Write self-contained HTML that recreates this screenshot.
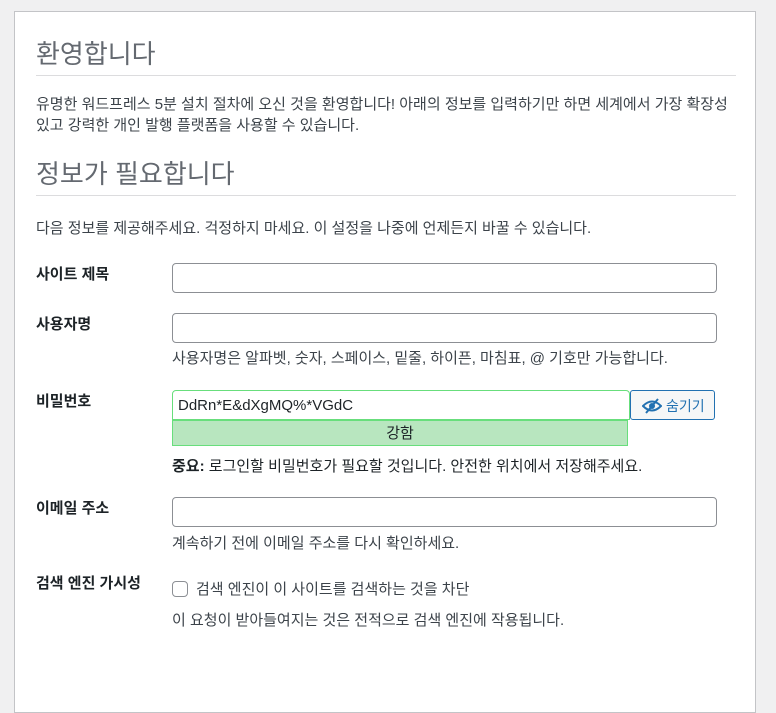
<!DOCTYPE html>
<html><head><meta charset="utf-8"><style>
body{margin:0;background:#f0f0f1;font-family:"Liberation Sans","Noto Sans CJK KR",sans-serif;color:#3c434a;font-size:15px;width:776px;height:620px;overflow:hidden;position:relative}
.box{position:absolute;left:14px;top:11px;width:740px;height:700px;background:#fff;border:1px solid #c3c4c7}
.a{position:absolute;white-space:nowrap}
h1{position:absolute;margin:0;font-weight:400;font-size:26px;color:#646970;left:21px;line-height:32px}
.hr{position:absolute;left:21px;width:700px;height:1px;background:#dcdcde}
.lbl{position:absolute;left:21px;font-weight:700;color:#1d2327;line-height:20px}
.in{position:absolute;left:157px;width:543px;height:28px;border:1px solid #8c8f94;border-radius:4px;background:#fff}
.d{position:absolute;left:157px}
.a,.lbl{line-height:20px}
</style></head><body>
<div class="box">
<h1 style="top:26px">환영합니다</h1>
<div class="hr" style="top:63px"></div>
<div class="a" style="left:21px;top:82px;line-height:21px">유명한 워드프레스 5분 설치 절차에 오신 것을 환영합니다! 아래의 정보를 입력하기만 하면 세계에서 가장 확장성<br>있고 강력한 개인 발행 플랫폼을 사용할 수 있습니다.</div>
<h1 style="top:146px">정보가 필요합니다</h1>
<div class="hr" style="top:183px"></div>
<div class="a" style="left:21px;top:207px">다음 정보를 제공해주세요. 걱정하지 마세요. 이 설정을 나중에 언제든지 바꿀 수 있습니다.</div>
<div class="lbl" style="top:253px">사이트 제목</div>
<div class="in" style="top:251px"></div>
<div class="lbl" style="top:303px">사용자명</div>
<div class="in" style="top:301px"></div>
<div class="d a" style="top:337px">사용자명은 알파벳, 숫자, 스페이스, 밑줄, 하이픈, 마침표, @ 기호만 가능합니다.</div>
<div class="lbl" style="top:380px">비밀번호</div>
<div class="a" style="left:157px;top:378px;width:451px;height:28px;border:1px solid #68de7c;border-radius:4px 4px 0 0;background:#fff;font-size:15px;line-height:30px;padding-left:5px;color:#1d2327">DdRn*E&amp;dXgMQ%*VGdC</div>
<div class="a" style="left:157px;top:408px;width:454px;height:24px;border:1px solid #68de7c;background:#b8e6bf;text-align:center;line-height:26px;color:#1d2327">강함</div>
<div class="a" style="left:615px;top:378px;width:83px;height:28px;border:1px solid #2271b1;border-radius:3px;background:#f6f7f7;color:#2271b1;line-height:30px;font-size:14px">
<svg style="position:absolute;left:11px;top:7px" width="20" height="16" viewBox="0 0 20 16"><path d="M1 8Q10 -1 19 8Q10 17 1 8Z" fill="none" stroke="#2271b1" stroke-width="2"/><circle cx="10" cy="8" r="3" fill="#2271b1"/><path d="M4 15L16 1" stroke="#2271b1" stroke-width="2"/></svg>
<span style="position:absolute;left:35px">숨기기</span></div>
<div class="d a" style="top:445px;color:#1d2327"><b>중요:</b> 로그인할 비밀번호가 필요할 것입니다. 안전한 위치에서 저장해주세요.</div>
<div class="lbl" style="top:487px">이메일 주소</div>
<div class="in" style="top:485px"></div>
<div class="d a" style="top:522px">계속하기 전에 이메일 주소를 다시 확인하세요.</div>
<div class="lbl" style="top:562px">검색 엔진 가시성</div>
<div class="a" style="left:157px;top:569px;width:14px;height:14px;border:1px solid #8c8f94;border-radius:4px"></div>
<div class="a" style="left:181px;top:568px">검색 엔진이 이 사이트를 검색하는 것을 차단</div>
<div class="a" style="left:157px;top:599px">이 요청이 받아들여지는 것은 전적으로 검색 엔진에 작용됩니다.</div>
</div>
</body></html>
